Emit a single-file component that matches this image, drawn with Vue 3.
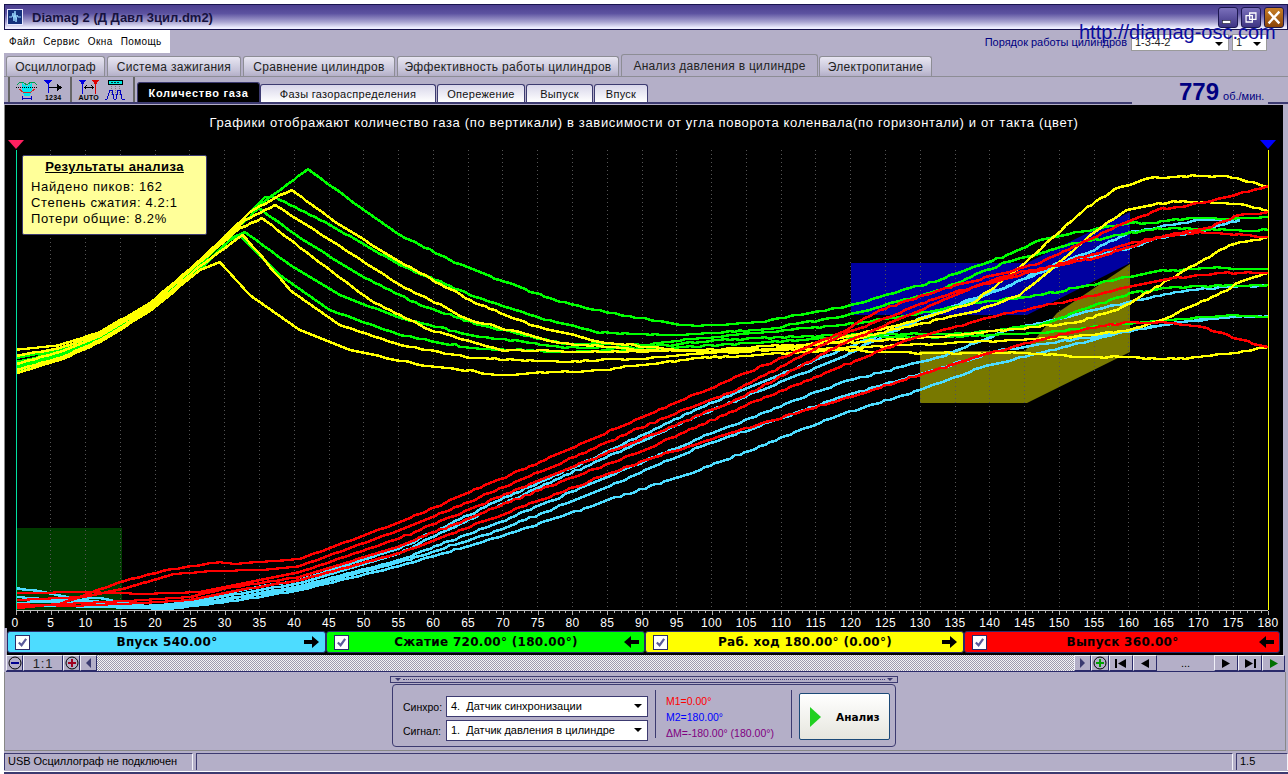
<script setup>
const tabs = [
  { label: "Осциллограф", width: 99 },
  { label: "Система зажигания", width: 134 },
  { label: "Сравнение цилиндров", width: 152 },
  { label: "Эффективность работы цилиндров", width: 222 },
  { label: "Анализ давления в цилиндре", width: 197, active: true },
  { label: "Электропитание", width: 113 },
];

const subTabs = [
  { label: "Количество газа", width: 123, active: true },
  { label: "Фазы газораспределения", width: 176 },
  { label: "Опережение", width: 88 },
  { label: "Выпуск", width: 67 },
  { label: "Впуск", width: 54 },
];

const bands = [
  { label: "Впуск 540.00°", color: "#4ddcff", dir: "right", width: 319 },
  { label: "Сжатие 720.00° (180.00°)", color: "#00ff00", dir: "left", width: 319 },
  { label: "Раб. ход 180.00° (0.00°)", color: "#ffff00", dir: "right", width: 319 },
  { label: "Выпуск 360.00°", color: "#ff0000", dir: "left", width: 316 },
];

const degToX = (d) => 16 + (d * 1252) / 180;
const degrees = Array.from({ length: 37 }, (_, i) => i * 5);
const minorTicks = Array.from({ length: 181 }, (_, i) => i);

let seed = 12345;
function rnd() {
  seed = (seed * 16807) % 2147483647;
  return seed / 2147483647;
}

// turns key points into a slightly noisy trace, like the sampled signal
function trace(keys) {
  const out = [];
  for (let i = 0; i < keys.length - 1; i++) {
    const [x0, y0] = keys[i];
    const [x1, y1] = keys[i + 1];
    const steps = Math.max(1, Math.round((x1 - x0) / 5));
    for (let s = 0; s < steps; s++) {
      const t = s / steps;
      const x = x0 + (x1 - x0) * t;
      const noise = x > 400 && s > 0 ? (rnd() - 0.5) * 1.6 : 0;
      out.push(`${Math.round(x)},${Math.round(y0 + (y1 - y0) * t + noise)}`);
    }
  }
  const last = keys[keys.length - 1];
  out.push(`${last[0]},${last[1]}`);
  return out.join(" ");
}

const cyanKeys = [
  [[16,588],[43,592],[67,597],[100,598],[143,606],[173,604],[217,595],[253,588],[300,580],[400,548],[500,500],[600,455],[700,408],[840,350],[973,300],[1073,260],[1130,248],[1157,238],[1197,232],[1240,220]],
  [[16,597],[60,600],[110,602],[150,607],[180,604],[220,597],[300,583],[400,553],[500,505],[600,460],[700,415],[840,358],[923,317],[1007,287],[1040,270],[1090,252],[1130,232],[1157,228],[1197,220],[1240,219]],
  [[16,603],[80,600],[130,604],[160,608],[220,600],[300,586],[400,560],[500,522],[600,480],[700,438],[840,383],[940,357],[1007,330],[1053,320],[1130,302],[1190,290],[1268,285]],
  [[16,600],[100,604],[165,609],[230,599],[300,588],[400,562],[500,530],[600,490],[700,447],[840,397],[900,380],[1000,350],[1100,336],[1173,323],[1223,317],[1268,316]],
  [[16,605],[100,607],[170,609],[240,600],[300,590],[400,566],[500,537],[600,503],[700,470],[840,415],[920,390],[980,368],[1040,353],[1123,332],[1173,323],[1230,318]],
];

const greenKeys = [
  [[16,358],[60,350],[100,335],[150,305],[200,262],[250,212],[308,169],[350,200],[400,235],[450,260],[500,280],[560,302],[620,315],[680,325],[720,325],[760,322],[840,308],[880,297],[940,280],[1007,255],[1040,240],[1080,232],[1130,223],[1147,223],[1190,218],[1223,219],[1268,217]],
  [[16,362],[60,352],[100,337],[150,307],[200,262],[240,222],[265,197],[275,197],[330,225],[400,265],[470,295],[540,318],[600,333],[680,335],[760,330],[840,317],[940,290],[1007,262],[1060,247],[1120,235],[1157,228],[1207,230],[1268,230]],
  [[16,366],[60,354],[100,338],[150,308],[200,265],[240,225],[259,208],[300,238],[360,275],[420,305],[480,325],[560,343],[640,345],[700,338],[840,325],[900,317],[973,303],[1040,295],[1130,277],[1153,272],[1207,268],[1268,269]],
  [[16,368],[60,356],[100,340],[150,310],[200,268],[232,238],[245,232],[290,265],[340,295],[400,318],[470,335],[560,347],[640,348],[720,340],[840,335],[973,333],[1040,325],[1130,293],[1173,287],[1268,285]],
  [[16,371],[60,358],[100,341],[150,311],[200,270],[230,240],[240,236],[280,275],[330,310],[400,335],[470,348],[560,352],[640,350],[720,345],[840,337],[940,337],[1040,333],[1110,325],[1173,320],[1230,315],[1268,317]],
];

const yellowKeys = [
  [[16,350],[60,345],[100,332],[150,303],[200,260],[250,212],[280,195],[292,190],[340,225],[400,262],[470,300],[530,325],[600,342],[700,352],[780,350],[840,338],[900,325],[973,303],[1020,267],[1087,207],[1120,187],[1150,178],[1197,176],[1227,176],[1268,187]],
  [[16,356],[60,348],[100,334],[150,305],[200,262],[245,220],[275,205],[330,240],[400,285],[470,320],[560,343],[650,350],[740,352],[840,342],[973,312],[1020,295],[1047,273],[1093,233],[1127,210],[1173,201],[1240,204],[1268,211]],
  [[16,364],[60,352],[100,336],[150,306],[200,262],[240,228],[262,218],[310,255],[370,300],[430,330],[500,350],[600,352],[700,350],[840,343],[960,335],[1073,323],[1117,310],[1140,297],[1190,267],[1230,245],[1268,237]],
  [[16,370],[60,358],[100,340],[150,309],[200,266],[243,235],[290,290],[340,325],[400,345],[470,358],[560,362],[650,358],[740,350],[840,348],[973,342],[1073,337],[1130,330],[1167,318],[1217,295],[1240,282],[1268,273]],
  [[16,373],[60,360],[100,342],[150,311],[200,270],[220,262],[250,295],[300,330],[350,350],[420,365],[500,375],[600,370],[700,358],[840,350],[913,353],[1027,353],[1083,357],[1130,357],[1157,359],[1190,358],[1233,353],[1268,347]],
];

const redKeys = [
  [[16,608],[60,604],[120,582],[167,570],[220,562],[233,564],[300,559],[400,522],[540,462],[640,418],[730,380],[840,333],[880,310],[940,290],[1040,263],[1073,247],[1127,222],[1157,210],[1207,202],[1268,186]],
  [[16,600],[83,597],[122,589],[173,574],[213,571],[260,570],[300,566],[400,530],[540,472],[640,428],[740,388],[840,336],[940,297],[1017,273],[1100,257],[1130,247],[1157,237],[1200,232],[1268,237]],
  [[16,593],[87,592],[143,594],[200,592],[260,580],[300,572],[400,538],[540,480],[640,440],[740,398],[840,345],[973,287],[1040,270],[1130,243],[1157,238],[1207,228],[1240,215],[1268,212]],
  [[16,606],[87,603],[143,600],[190,597],[227,588],[300,577],[400,546],[540,490],[640,452],[740,408],[840,367],[907,340],[1007,313],[1073,300],[1123,288],[1173,278],[1223,273],[1268,273]],
  [[16,604],[70,606],[143,603],[190,600],[240,590],[300,580],[400,553],[540,500],[640,462],[740,430],[840,400],[920,375],[990,353],[1040,340],[1090,328],[1130,322],[1173,323],[1207,328],[1233,338],[1268,347]],
];

const traces = [
  ...cyanKeys.map((k) => ({ color: "#4ddcff", points: trace(k) })),
  ...greenKeys.map((k) => ({ color: "#00ff00", points: trace(k) })),
  ...yellowKeys.map((k) => ({ color: "#ffff00", points: trace(k) })),
  ...redKeys.map((k) => ({ color: "#ff0000", points: trace(k) })),
];
</script>

<template>
  <div class="window">
    <div class="titlebar">
      <svg class="app-icon" width="16" height="16" viewBox="0 0 16 16">
        <rect x="0.5" y="0.5" width="15" height="15" fill="#14307c" stroke="#e8e8ff" />
        <path d="M2 8h3l1-4 1 8 1-10 1 11 1-7 1 2h3" fill="none" stroke="#9ad8ff" stroke-width="1" />
      </svg>
      <span class="title-text">Diamag 2 (Д Давл 3цил.dm2)</span>
      <div class="win-buttons">
        <button class="win-btn">
          <svg width="20" height="21" viewBox="0 0 20 21"><rect x="4" y="14" width="9" height="3" fill="#fff" stroke="#222" stroke-width="0.6" /></svg>
        </button>
        <button class="win-btn">
          <svg width="20" height="21" viewBox="0 0 20 21"><path d="M8.500 5.500h7v7h-7zM4.500 8.500h7v7h-7z" fill="none" stroke="#fff" stroke-width="1.400" /></svg>
        </button>
        <button class="win-btn win-close">
          <svg width="20" height="21" viewBox="0 0 20 21"><path d="M4 4l12 13M16 4L4 17" stroke="#fff" stroke-width="2.600" /></svg>
        </button>
      </div>
    </div>

    <div class="menu-row">
      <div class="menu">
        <span>Файл</span><span>Сервис</span><span>Окна</span><span>Помощь</span>
      </div>
      <div class="order">
        <span class="order-label">Порядок работы цилиндров</span>
        <div class="mini-select order-first"><span>1-3-4-2</span><i class="caret" /></div>
        <div class="mini-select order-second"><span>1</span><i class="caret" /></div>
      </div>
    </div>

    <div class="tabs">
      <div
        v-for="tab in tabs"
        :key="tab.label"
        class="tab"
        :class="{ 'tab--active': tab.active }"
        :style="{ width: tab.width + 'px' }"
      >
        {{ tab.label }}
      </div>
    </div>

    <div class="toolbar">
      <div class="tool-group tool-group--first">
        <svg width="22" height="20" viewBox="0 0 22 20" shape-rendering="crispEdges">
          <path d="M1 5l3-3h3l4 3 4-3h3l3 3" fill="none" stroke="#00a050" />
          <path d="M6 3l5 3 5-3v6l-2 7H8L6 9z" fill="#00e8f0" />
          <path d="M0 7.500h22" stroke="#000" stroke-dasharray="1 1" />
          <path d="M3 9l4 3h8l4-3" fill="none" stroke="#e02020" />
          <path d="M6 18.500h10M6.500 16v5M15.500 16v5" stroke="#0000c0" />
        </svg>
        <svg width="18" height="20" viewBox="0 0 18 20" shape-rendering="crispEdges">
          <path d="M0 0h8L4 5z" fill="#0000e0" />
          <path d="M4.500 3v10" stroke="#0000e0" />
          <path d="M5 7.500h9" stroke="#000" />
          <path d="M13 4l5 3.500-5 3.500z" fill="#000" />
          <text x="1" y="19.500" class="tool-mini">1234</text>
        </svg>
      </div>
      <div class="tool-group tool-group--second">
        <svg class="tool-open" width="22" height="20" viewBox="0 0 22 20" shape-rendering="crispEdges">
          <path d="M1 0h7L4.500 5z" fill="#0000e0" />
          <path d="M14 0h7l-3.500 5z" fill="#e00000" />
          <path d="M4.500 3v11" stroke="#0000e0" />
          <path d="M17.500 3v11" stroke="#e00000" />
          <path d="M7 7.500h8M8.500 5.500l-2 2 2 2M13.500 5.500l2 2-2 2" fill="none" stroke="#000" />
          <text x="0.5" y="20" class="tool-mini">AUTO</text>
        </svg>
        <svg width="22" height="20" viewBox="0 0 22 20" shape-rendering="crispEdges">
          <rect x="3.500" y="0.500" width="14" height="4" fill="#00e8e0" stroke="#000" />
          <path d="M6 2.500h9" stroke="#003030" stroke-dasharray="2 1" />
          <path d="M6.500 6v9M10.500 6v9M14.500 6v9" stroke="#777" stroke-dasharray="1 1" />
          <path d="M0 19h2l3-9 2 0 2 9h2l2-9 2 0 2 9h3" fill="none" stroke="#0000c0" />
        </svg>
      </div>
      <div class="subtabs">
        <div
          v-for="tab in subTabs"
          :key="tab.label"
          class="subtab"
          :class="{ 'subtab--active': tab.active }"
          :style="{ width: tab.width + 'px' }"
        >
          {{ tab.label }}
        </div>
      </div>
      <div class="rpm"><b>779</b><span>об./мин.</span></div>
    </div>

    <div class="chart">
      <div class="caption">Графики отображают количество газа (по вертикали) в зависимости от угла поворота коленвала(по горизонтали) и от такта (цвет)</div>
      <svg class="plot" width="1278" height="490" viewBox="5 138 1278 490">
        <polygon points="16,528 122,528 122,610 16,610" fill="#003c00" />
        <polygon points="851,263 1027,263 1130,212 1130,263 1027,315 851,315" fill="#0000a0" />
        <polygon points="920,351 1025,351 1057,313 1130,264 1130,352 1027,403 920,403" fill="#787800" />

        <line
          v-for="d in degrees"
          :key="'g' + d"
          :x1="degToX(d)"
          :x2="degToX(d)"
          y1="150"
          y2="610"
          stroke="#555"
          stroke-dasharray="1 3"
          shape-rendering="crispEdges"
        />

        <polyline
          v-for="(t, i) in traces"
          :key="i"
          :points="t.points"
          :stroke="t.color"
          fill="none"
          stroke-width="2.600"
          shape-rendering="crispEdges"
        />

        <line x1="16" x2="1268" y1="149.500" y2="149.500" stroke="url(#topline)" />
        <line x1="16.500" x2="16.500" y1="150" y2="610" stroke="#00e0a0" />
        <line x1="1268.500" x2="1268.500" y1="150" y2="610" stroke="#ffff00" />
        <line x1="16" x2="1268" y1="610.500" y2="610.500" stroke="#c0c0c0" />

        <line
          v-for="d in minorTicks"
          :key="'t' + d"
          :x1="Math.round(degToX(d)) + 0.5"
          :x2="Math.round(degToX(d)) + 0.5"
          y1="611"
          :y2="d % 5 === 0 ? 615 : 613"
          stroke="#b0b0b0"
        />

        <text
          v-for="d in degrees"
          :key="'l' + d"
          :x="degToX(d) - (d === 0 ? 1 : 0)"
          y="627"
          class="axis-label"
        >{{ d }}</text>

        <polygon points="8,140 24,140 16,149" fill="#ff2060" />
        <polygon points="1260,140 1276,140 1268,149" fill="#0000ff" />

        <defs>
          <linearGradient id="topline" x1="0" x2="1" y1="0" y2="0">
            <stop offset="0.8" stop-color="#ffffff" />
            <stop offset="1" stop-color="#ffff40" />
          </linearGradient>
        </defs>
      </svg>

      <div class="results">
        <div class="results-title">Результаты анализа</div>
        <div>Найдено пиков: 162</div>
        <div>Степень сжатия: 4.2:1</div>
        <div>Потери общие: 8.2%</div>
      </div>
    </div>

    <div class="bands">
      <div
        v-for="band in bands"
        :key="band.label"
        class="band"
        :style="{ background: band.color, width: band.width + 'px' }"
      >
        <span class="check">
          <svg width="11" height="11" viewBox="0 0 12 12"><path d="M2 6l3 3 5-7" fill="none" stroke="#5a5a9a" stroke-width="2.400" /></svg>
        </span>
        <span class="band-label">{{ band.label }}</span>
        <svg class="band-arrow" width="16" height="12" viewBox="0 0 16 12">
          <path v-if="band.dir === 'right'" d="M0 4h8V0l7 6-7 6V8H0z" fill="#000" />
          <path v-else d="M16 4H8V0L1 6l7 6V8h8z" fill="#000" />
        </svg>
      </div>
    </div>

    <div class="scrollbar">
      <button class="sb-btn sb-round">
        <svg width="14" height="14" viewBox="0 0 14 14"><circle cx="7" cy="7" r="6" fill="none" stroke="#000" /><path d="M3 7h8" stroke="#000090" stroke-width="2" /></svg>
      </button>
      <button class="sb-btn sb-zoom">1:1</button>
      <button class="sb-btn sb-round">
        <svg width="14" height="14" viewBox="0 0 14 14"><circle cx="7" cy="7" r="6" fill="none" stroke="#000" /><path d="M3 7h8M7 3v8" stroke="#a00020" stroke-width="2" /></svg>
      </button>
      <button class="sb-btn sb-arrow">
        <svg width="6" height="10" viewBox="0 0 6 10"><path d="M5 0v10L0 5z" fill="#3a3a70" /></svg>
      </button>
      <div class="sb-track" />
      <button class="sb-btn sb-arrow">
        <svg width="6" height="10" viewBox="0 0 6 10"><path d="M0 0v10l5-5z" fill="#3a3a70" /></svg>
      </button>
      <button class="sb-btn sb-round sb-round--wide">
        <svg width="14" height="14" viewBox="0 0 14 14"><circle cx="7" cy="7" r="6" fill="none" stroke="#000" /><path d="M3 7h8M7 3v8" stroke="#00a000" stroke-width="2" /></svg>
      </button>
      <button class="sb-btn sb-nav">
        <svg width="12" height="9" viewBox="0 0 12 9"><path d="M1 0v9" stroke="#000" stroke-width="2" /><path d="M11 0v9L3 4.500z" fill="#000" /></svg>
      </button>
      <button class="sb-btn sb-nav">
        <svg width="10" height="9" viewBox="0 0 10 9"><path d="M9 0v9L1 4.500z" fill="#000" /></svg>
      </button>
      <div class="sb-dots">...</div>
      <button class="sb-btn sb-nav">
        <svg width="10" height="9" viewBox="0 0 10 9"><path d="M1 0v9l8-4.500z" fill="#000" /></svg>
      </button>
      <button class="sb-btn sb-nav">
        <svg width="12" height="9" viewBox="0 0 12 9"><path d="M11 0v9" stroke="#000" stroke-width="2" /><path d="M1 0v9l8-4.500z" fill="#000" /></svg>
      </button>
      <button class="sb-btn sb-play">
        <svg width="10" height="9" viewBox="0 0 10 9"><path d="M1 0v9l8-4.500z" fill="#007000" /></svg>
      </button>
    </div>

    <div class="controls">
      <div class="controls-inner">
        <div class="grip"><i /><span /><i /></div>
        <div class="group">
          <div class="fields">
            <div class="field">
              <label>Синхро:</label>
              <div class="select"><span>4.&nbsp; Датчик синхронизации</span><i class="caret" /></div>
            </div>
            <div class="field">
              <label>Сигнал:</label>
              <div class="select"><span>1.&nbsp; Датчик давления в цилиндре</span><i class="caret" /></div>
            </div>
          </div>
          <div class="markers">
            <div class="m1">M1=0.00°</div>
            <div class="m2">M2=180.00°</div>
            <div class="dm">ΔM=-180.00° (180.00°)</div>
          </div>
          <div class="run">
            <button class="run-btn">
              <svg width="11" height="20" viewBox="0 0 11 20"><path d="M0 0l11 10L0 20z" fill="#20d020" /></svg>
              <span>Анализ</span>
            </button>
          </div>
        </div>
      </div>
    </div>

    <div class="statusbar">
      <div class="st st-first">USB Осциллограф не подключен</div>
      <div class="st st-mid" />
      <div class="st st-last">1.5</div>
    </div>

    <div class="watermark">http://diamag-osc.com</div>
  </div>
</template>

<style>
html,
body {
  margin: 0;
  background: #fff;
  overflow: hidden;
}
</style>

<style scoped>
.window {
  position: relative;
  box-sizing: border-box;
  width: 1288px;
  height: 774px;
  padding: 4px 0 0 4px;
  display: flex;
  flex-direction: column;
  background: #b4afc8;
  font-family: "Liberation Sans", Arial, sans-serif;
  font-size: 12px;
  color: #000;
  overflow: hidden;
  box-shadow: inset 4px 0 0 #fff, inset 0 4px 0 #fff, inset 0 -2px 0 #3c3a70, inset 0 -3px 0 #fff;
}

.titlebar {
  height: 26px;
  box-sizing: border-box;
  flex: none;
  border: 1px solid #18144e;
  display: flex;
  align-items: center;
  padding: 0 3px 0 2px;
  background: linear-gradient(#4b3f8f 0%, #5c52a0 35%, #a7a2d0 70%, #eeeeff 95%);
}

.app-icon {
  margin-right: 9px;
}

.title-text {
  font-size: 13px;
  font-weight: 700;
  color: #16123e;
}

.win-buttons {
  margin-left: auto;
  display: flex;
  gap: 3px;
}

.win-btn {
  width: 20px;
  height: 21px;
  padding: 0;
  border: 1px solid #1c1850;
  border-radius: 3px;
  background: linear-gradient(#7a70bb, #3f3584);
  display: flex;
  align-items: center;
  justify-content: center;
}

.win-close {
  background: linear-gradient(#c88028, #8a4408);
}

.menu-row {
  flex: none;
  height: 23px;
  display: flex;
  justify-content: space-between;
}

.menu {
  width: 166px;
  height: 23px;
  box-sizing: border-box;
  background: #fff;
  display: flex;
  align-items: center;
  gap: 8px;
  padding-left: 5px;
  font-size: 10px;
  letter-spacing: 0.4px;
}

.order {
  display: flex;
  align-items: flex-start;
  padding: 4px 21px 0 0;
}

.order-label {
  color: #000080;
  font-size: 11px;
  margin-top: 2px;
  margin-right: 4px;
}

.mini-select {
  position: relative;
  box-sizing: border-box;
  height: 17px;
  background: #fff;
  border: 1px solid #9a9a9a;
  font-size: 11px;
  padding-left: 3px;
  line-height: 15px;
  color: #222;
}

.order-first {
  width: 98px;
  margin-right: 3px;
}

.order-second {
  width: 35px;
}

.caret {
  position: absolute;
  right: 5px;
  top: 7px;
  border: 4px solid transparent;
  border-top: 4px solid #000;
  border-bottom: 0;
  width: 0;
  height: 0;
}

.tabs {
  flex: none;
  height: 23px;
  display: flex;
  align-items: flex-end;
  gap: 2px;
  padding-left: 2px;
  box-sizing: border-box;
}

.tab {
  box-sizing: border-box;
  height: 20px;
  display: flex;
  align-items: center;
  justify-content: center;
  border: 1px solid #8d8d95;
  border-bottom: 0;
  border-radius: 3px 3px 0 0;
  background: linear-gradient(#e8e6f2, #c6c3d8 70%, #b4afc8);
  font-size: 12px;
  letter-spacing: 0.3px;
  color: #222;
  white-space: nowrap;
}

.tab--active {
  height: 22px;
  margin-right: -1px;
  background: #b4afc8;
  z-index: 1;
}

.toolbar {
  flex: none;
  height: 28px;
  box-sizing: border-box;
  border-top: 1px solid #8d8d95;
  border-bottom: 2px solid #3c3a70;
  display: flex;
  align-items: flex-end;
}

.tool-group {
  height: 25px;
  box-sizing: border-box;
  border-left: 2px solid #666;
  display: flex;
  align-items: center;
}

.tool-group--first {
  width: 62px;
  margin-left: 4px;
  padding-left: 6px;
  gap: 6px;
}

.tool-group--second {
  width: 63px;
  padding-left: 6px;
  gap: 5px;
}

.tool-mini {
  font-size: 7px;
  font-family: "Liberation Sans", sans-serif;
  font-weight: 700;
  letter-spacing: 0.2px;
}

.subtabs {
  display: flex;
  align-items: flex-end;
  border-left: 2px solid #666;
  padding-left: 2px;
  height: 25px;
  gap: 1px;
}

.subtab {
  box-sizing: border-box;
  height: 18px;
  display: flex;
  align-items: center;
  justify-content: center;
  border: 1px solid #3c3a70;
  border-bottom: 0;
  border-radius: 3px 3px 0 0;
  background: linear-gradient(#d8d6ea, #ffffff);
  font-size: 11px;
  letter-spacing: 0.3px;
  color: #111;
  white-space: nowrap;
}

.subtab--active {
  height: 20px;
  margin-right: -1px;
  background: #000;
  color: #fff;
  font-weight: 700;
  letter-spacing: 0.7px;
}

.rpm {
  margin-left: auto;
  margin-right: 20px;
  margin-bottom: -2px;
  width: 136px;
  box-sizing: border-box;
  padding-left: 47px;
  display: flex;
  align-items: baseline;
  gap: 4px;
  height: 25px;
  color: #000080;
  background: #b4afc8;
}

.rpm b {
  font-size: 24px;
  line-height: 26px;
}

.rpm span {
  font-size: 11px;
}

.chart {
  flex: none;
  position: relative;
  margin: 1px 0 0 1px;
  width: 1278px;
  height: 523px;
  background: #000;
  display: flex;
  flex-direction: column;
  box-shadow: -1px 0 0 #888;
}

.caption {
  flex: none;
  height: 33px;
  box-sizing: border-box;
  padding-top: 10px;
  text-align: center;
  color: #fff;
  font-size: 13px;
  letter-spacing: 0.66px;
  white-space: nowrap;
}

.plot {
  display: block;
  flex: none;
  overflow: visible;
}

.axis-label {
  fill: #fff;
  font-size: 12px;
  font-family: "Liberation Sans", sans-serif;
  text-anchor: middle;
  letter-spacing: 0.3px;
}

.results {
  position: absolute;
  left: 17px;
  top: 50px;
  width: 185px;
  height: 80px;
  box-sizing: border-box;
  padding: 3px 8px;
  background: #ffff99;
  border: 1px solid #3c3a70;
  border-radius: 2px;
  font-size: 13px;
  line-height: 16px;
  letter-spacing: 0.65px;
  color: #000;
}

.results-title {
  text-align: center;
  font-weight: 700;
  text-decoration: underline;
  margin-bottom: 4px;
  letter-spacing: 0.45px;
}

.bands {
  flex: none;
  display: flex;
  height: 27px;
  margin-left: 3px;
  padding: 3px 0 2px;
  box-sizing: border-box;
  background: #000;
  width: 1276px;
}

.band {
  box-sizing: border-box;
  border-radius: 3px;
  border: 1px solid #2a2a6a;
  display: flex;
  align-items: center;
  padding: 0 5px 0 7px;
  font-family: "DejaVu Sans", sans-serif;
  font-size: 12px;
  font-weight: 700;
}

.check {
  flex: none;
  width: 13px;
  height: 13px;
  border: 1px solid #2a2a6a;
  background: #fff;
  display: flex;
  align-items: center;
  justify-content: center;
}

.band-label {
  flex: 1;
  text-align: center;
  white-space: nowrap;
  letter-spacing: 0.3px;
}

.band-arrow {
  flex: none;
}

.scrollbar {
  flex: none;
  height: 17px;
  margin: 0 3px 0 2px;
  box-sizing: border-box;
  display: flex;
  align-items: stretch;
  border-bottom: 1px solid #2a2a6a;
}

.sb-btn {
  box-sizing: border-box;
  padding: 0;
  display: flex;
  align-items: center;
  justify-content: center;
  background: #b4afc8;
  border: 0;
  border-top: 1px solid #f0f0f8;
  border-left: 1px solid #f0f0f8;
  border-right: 1px solid #2a2a6a;
  border-bottom: 1px solid #2a2a6a;
}

.sb-round {
  width: 17px;
}

.sb-round--wide {
  width: 18px;
}

.sb-arrow {
  width: 17px;
}

.sb-zoom {
  width: 40px;
  font-family: "Liberation Sans", sans-serif;
  font-size: 13px;
  letter-spacing: 0.8px;
  color: #222;
}

.sb-track {
  flex: 1;
  background: repeating-conic-gradient(#f4f4f4 0 25%, #9e9aae 0 50%) 0 0 / 2px 2px;
}

.sb-nav {
  width: 24px;
}

.sb-play {
  width: 23px;
}

.sb-dots {
  width: 57px;
  text-align: center;
  line-height: 16px;
  font-size: 11px;
}

.controls {
  flex: none;
  height: 79px;
  box-sizing: border-box;
  border-bottom: 1px solid #888;
  border-left: 1px solid #888;
  border-right: 1px solid #888;
  margin-right: 2px;
  display: flex;
  justify-content: center;
}

.controls-inner {
  width: 508px;
  margin-top: 4px;
  margin-left: -2px;
}

.grip {
  height: 7px;
  border: 1px solid #3c3a70;
  box-sizing: border-box;
  display: flex;
  align-items: center;
  gap: 2px;
  padding: 0 4px;
  margin-bottom: 1px;
}

.grip i {
  border: 3px solid transparent;
  border-top: 3px solid #3c3a70;
  border-bottom: 0;
}

.grip span {
  flex: 1;
  border-top: 1px dotted #3c3a70;
}

.group {
  height: 63px;
  box-sizing: border-box;
  margin: 0 2px;
  border: 1px solid #3c3a70;
  border-radius: 4px;
  display: flex;
  align-items: stretch;
  padding: 5px 5px 8px 10px;
}

.fields {
  display: flex;
  flex-direction: column;
  gap: 3px;
  padding-top: 6px;
  box-sizing: border-box;
  width: 245px;
  flex: none;
}

.field {
  display: flex;
  align-items: center;
  justify-content: space-between;
}

.field label {
  font-size: 10.500px;
}

.select {
  position: relative;
  box-sizing: border-box;
  width: 202px;
  height: 21px;
  border: 1px solid #3c3a70;
  background: #fff;
  padding-left: 4px;
  line-height: 18px;
  font-size: 11px;
  white-space: nowrap;
}

.markers {
  width: 136px;
  box-sizing: border-box;
  flex: none;
  margin-left: 7px;
  border-left: 1px solid #3c3a70;
  padding: 3px 0 0 10px;
  font-size: 10.500px;
  line-height: 16px;
  white-space: nowrap;
}

.m1 {
  color: #ff0000;
}

.m2 {
  color: #0000ff;
}

.dm {
  color: #800080;
}

.run {
  border-left: 1px solid #3c3a70;
  padding: 3px 0 0 7px;
  flex: 1;
  display: flex;
  align-items: flex-start;
}

.run-btn {
  width: 91px;
  height: 47px;
  flex: none;
  box-sizing: border-box;
  border: 1px solid #1c4a78;
  border-radius: 2px;
  background: linear-gradient(#ffffff, #e6e6de);
  padding: 0 0 0 10px;
  display: flex;
  align-items: center;
  font-family: "DejaVu Sans", sans-serif;
  font-size: 10.500px;
  font-weight: 700;
}

.run-btn span {
  margin-left: 15px;
}

.statusbar {
  flex: none;
  height: 17px;
  margin-top: 2px;
  display: flex;
  gap: 3px;
}

.st {
  box-sizing: border-box;
  border-top: 1px solid #3c3a70;
  border-left: 1px solid #3c3a70;
  border-right: 1px solid #f4f4fa;
  font-size: 11px;
  line-height: 15px;
  padding-left: 3px;
  white-space: nowrap;
}

.st-first {
  width: 189px;
  letter-spacing: -0.05px;
}

.st-mid {
  flex: 1;
}

.st-last {
  width: 52px;
}

.watermark {
  position: absolute;
  left: 1079px;
  top: 21px;
  color: #0c0ca0;
  font-size: 20px;
  white-space: nowrap;
}

.tool-open {
  overflow: visible;
}
</style>
